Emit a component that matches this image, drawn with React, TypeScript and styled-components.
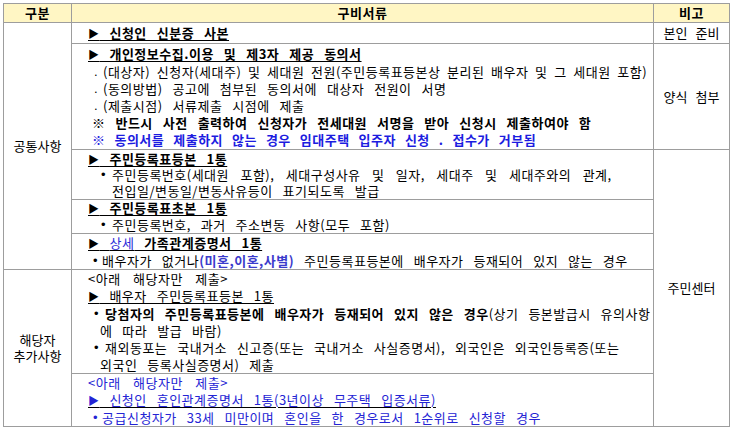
import React from 'react';
import styled, { createGlobalStyle } from 'styled-components';

const GlobalStyle = createGlobalStyle`
  body {
    margin: 0;
    padding: 3px;
    background: #fff;
    font-family: "Noto Sans CJK KR", "Noto Sans", sans-serif;
    font-size: 13px;
    color: #000;
  }
`;

const Table = styled.table`
  width: 726px;
  border-collapse: collapse;
  table-layout: fixed;
  border: 1px solid #8e8e8e;
`;

const Col = styled.col<{ $w: number }>`
  width: ${p => p.$w}px;
`;

const Row = styled.tr<{ $h: number }>`
  height: ${p => p.$h}px;
`;

const Th = styled.th`
  background: #fff6c4;
  border: 1px solid #9d9d9d;
  font-weight: 700;
  letter-spacing: 0.5px;
  padding: 0;
  line-height: 16px;
  text-align: center;
`;

const CatCell = styled.td`
  border: 1px solid #9d9d9d;
  text-align: center;
  vertical-align: middle;
  line-height: 16px;
  word-spacing: 5px;
  padding: 0;
`;

const NoteCell = styled(CatCell)``;

const DocCell = styled.td<{ $lh?: number }>`
  border: 1px solid #9d9d9d;
  padding: 0 2px 0 16px;
  vertical-align: middle;
  line-height: ${p => p.$lh ?? 17}px;
  letter-spacing: 0.5px;
  word-spacing: 6.5px;
`;

const Line = styled.div<{ $blue?: boolean; $ws?: number }>`
  white-space: nowrap;
  color: ${p => (p.$blue ? '#2424d4' : 'inherit')};
  ${p => (p.$ws !== undefined ? `word-spacing: ${p.$ws}px;` : '')}
`;

const Heading = styled.span<{ $bold?: boolean; $blue?: boolean }>`
  text-decoration: underline;
  text-decoration-color: #000;
  text-decoration-thickness: 1px;
  text-underline-offset: 2px;
  font-weight: ${p => (p.$bold ? 700 : 400)};
  color: ${p => (p.$blue ? '#2424d4' : '#000')};
`;

const Arrow = styled.span`
  font-size: 11px;
`;

const Item = styled.div<{ $start: number; $hang: number; $blue?: boolean; $ws?: number }>`
  white-space: nowrap;
  padding-left: ${p => p.$hang}px;
  text-indent: ${p => p.$start - p.$hang}px;
  color: ${p => (p.$blue ? '#2424d4' : 'inherit')};
  ${p => (p.$ws !== undefined ? `word-spacing: ${p.$ws}px;` : '')}
`;

const Tail = styled.span`
  word-spacing: 6.5px;
`;

const Mark = styled.span<{ $w: number }>`
  display: inline-block;
  width: ${p => p.$w}px;
  text-indent: 0;
  line-height: inherit;
  vertical-align: top;
  font-family: "Liberation Sans", sans-serif;
`;

const Strong = styled.b<{ $color?: string }>`
  font-weight: 700;
  color: ${p => p.$color || 'inherit'};
`;

const Soft = styled.span`
  color: #2a2ad8;
  font-weight: 400;
`;

function App() {
  return (
    <>
      <GlobalStyle />
      <Table>
        <colgroup>
          <Col $w={68} />
          <Col $w={582} />
          <Col $w={76} />
        </colgroup>
        <thead>
          <Row $h={19}>
            <Th>구분</Th>
            <Th>구비서류</Th>
            <Th>비고</Th>
          </Row>
        </thead>
        <tbody>
          <Row $h={21}>
            <CatCell rowSpan={5}>공통사항</CatCell>
            <DocCell>
              <Line><Heading $bold><Arrow>▶</Arrow> 신청인 신분증 사본</Heading></Line>
            </DocCell>
            <NoteCell>본인 준비</NoteCell>
          </Row>
          <Row $h={106}>
            <DocCell>
              <Line><Heading $bold><Arrow>▶</Arrow> 개인정보수집.이용 및 제3자 제공 동의서</Heading></Line>
              <Item $start={6} $hang={15} $ws={3.2}><Mark $w={9}>.</Mark>(대상자) 신청자(세대주) 및 세대원 전원(주민등록표등본상 분리된 배우자 및 그 세대원 포함)</Item>
              <Item $start={6} $hang={15}><Mark $w={9}>.</Mark>(동의방법) 공고에 첨부된 동의서에 대상자 전원이 서명</Item>
              <Item $start={6} $hang={15}><Mark $w={9}>.</Mark>(제출시점) 서류제출 시점에 제출</Item>
              <Item $start={4} $hang={4}><Strong>※ 반드시 사전 출력하여 신청자가 전세대원 서명을 받아 신청시 제출하여야 함</Strong></Item>
              <Item $start={4} $hang={4} $ws={5.5}><Strong $color="#1c1ce0">※ 동의서를 제출하지 않는 경우 임대주택 입주자 신청 . 접수가 거부됨</Strong></Item>
            </DocCell>
            <NoteCell>양식 첨부</NoteCell>
          </Row>
          <Row $h={50}>
            <DocCell $lh={16}>
              <Line><Heading $bold><Arrow>▶</Arrow> 주민등록표등본 1통</Heading></Line>
              <Item $start={13} $hang={24} $ws={8}>
                <Mark $w={11}>•</Mark>주민등록번호(세대원 포함), 세대구성사유 및 일자, 세대주 및 세대주와의 관계,<br />
                <Tail>전입일/변동일/변동사유등이 표기되도록 발급</Tail>
              </Item>
            </DocCell>
            <NoteCell rowSpan={5}>주민센터</NoteCell>
          </Row>
          <Row $h={34}>
            <DocCell $lh={16.5}>
              <Line><Heading $bold><Arrow>▶</Arrow> 주민등록표초본 1통</Heading></Line>
              <Item $start={13} $hang={24}><Mark $w={11}>•</Mark>주민등록번호, 과거 주소변동 사항(모두 포함)</Item>
            </DocCell>
          </Row>
          <Row $h={36}>
            <DocCell>
              <Line>
                <Heading $bold><Arrow>▶</Arrow> <Soft>상세</Soft> 가족관계증명서 1통</Heading>
              </Line>
              <Item $start={5} $hang={12}>
                <Mark $w={9}>•</Mark>배우자가 없거나<Strong $color="#3b3bcc">(미혼,이혼,사별)</Strong> 주민등록표등본에 배우자가 등재되어 있지 않는 경우
              </Item>
            </DocCell>
          </Row>
          <Row $h={104}>
            <CatCell rowSpan={2}>해당자<br />추가사항</CatCell>
            <DocCell>
              <Line $ws={9}>&lt;아래 해당자만 제출&gt;</Line>
              <Line><Heading><Arrow>▶</Arrow> 배우자 주민등록표등본 1통</Heading></Line>
              <Item $start={6} $hang={12}>
                <Mark $w={11}>•</Mark><Strong>당첨자의 주민등록표등본에 배우자가 등재되어 있지 않은 경우</Strong>(상기 등본발급시 유의사항<br />
                에 따라 발급 바람)
              </Item>
              <Item $start={6} $hang={12}>
                <Mark $w={11}>•</Mark>재외동포는 국내거소 신고증(또는 국내거소 사실증명서), 외국인은 외국인등록증(또는<br />
                외국인 등록사실증명서) 제출
              </Item>
            </DocCell>
          </Row>
          <Row $h={52}>
            <DocCell>
              <Line $blue $ws={9}>&lt;아래 해당자만 제출&gt;</Line>
              <Line><Heading $blue><Arrow>▶</Arrow> 신청인 혼인관계증명서 1통(3년이상 무주택 입증서류)</Heading></Line>
              <Item $start={5} $hang={12} $blue $ws={6.5}>
                <Mark $w={9}>•</Mark>공급신청자가 33세 미만이며 혼인을 한 경우로서 1순위로 신청할 경우
              </Item>
            </DocCell>
          </Row>
        </tbody>
      </Table>
    </>
  );
}

export default App;
